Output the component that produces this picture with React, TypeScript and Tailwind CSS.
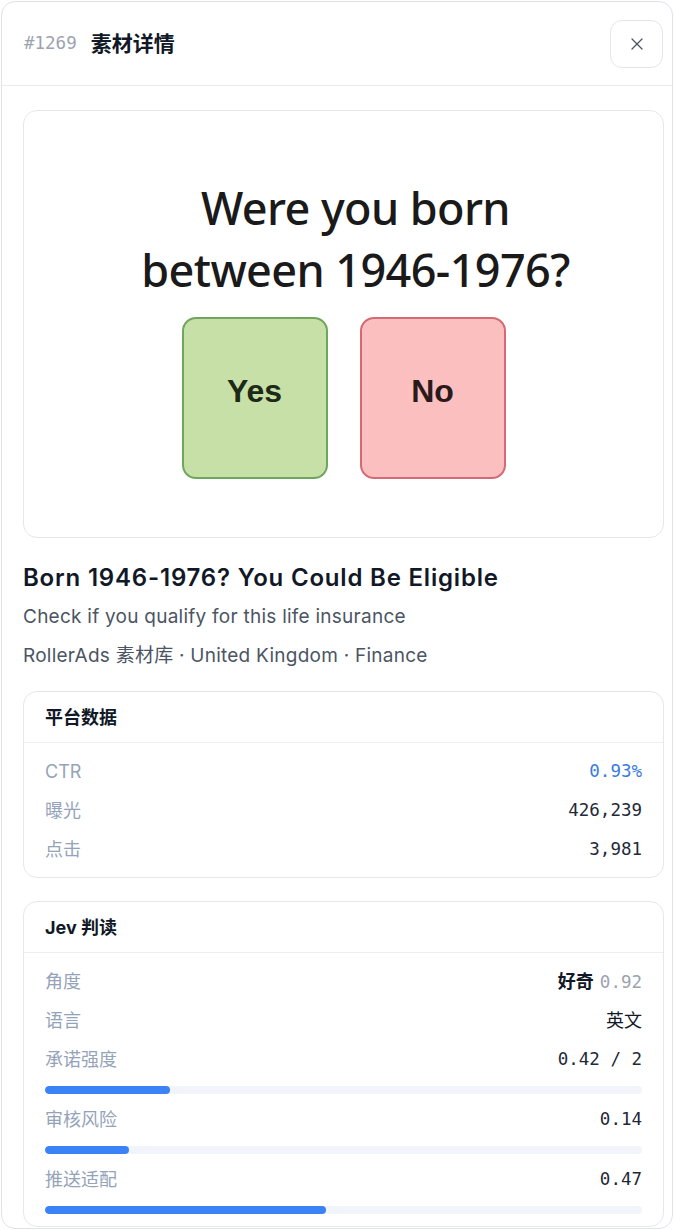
import { X } from 'lucide-react';

const sans = "font-['Inter','Noto_Sans_CJK_SC',sans-serif]";
const mono = "font-['DejaVu_Sans_Mono','Noto_Sans_CJK_SC',monospace]";

const platformStats = [
  { label: 'CTR', value: '0.93%', accent: true },
  { label: '曝光', value: '426,239' },
  { label: '点击', value: '3,981' },
];

const scores = [
  { label: '承诺强度', value: '0.42 / 2', pct: 21 },
  { label: '审核风险', value: '0.14', pct: 14 },
  { label: '推送适配', value: '0.47', pct: 47 },
];

const Card = ({ title, children }: { title: string; children: React.ReactNode }) => (
  <div className="rounded-[14px] border border-[#e5e7eb] bg-white overflow-hidden">
    <div className="h-[51px] flex items-center px-[21px] border-b border-[#eceef1]">
      <h3 className="text-[18px] font-bold text-[#111827]">{title}</h3>
    </div>
    {children}
  </div>
);

const Row = ({ label, children }: { label: string; children: React.ReactNode }) => (
  <div className="h-[39px] flex items-center justify-between">
    <span className="text-[18px] text-[#94a3b8]">{label}</span>
    {children}
  </div>
);

const AdPreview = () => (
  <div className="h-[428px] rounded-[14px] border border-[#e5e7eb] bg-white flex flex-col items-center pt-[66px]">
    <div className="pl-[24px] text-center font-['Noto_Sans',sans-serif] font-medium text-[45px] leading-[62px] text-[#1a1a1a] tracking-[-0.6px]">
      <div>Were you born</div>
      <div>between 1946-1976?</div>
    </div>
    <div className="flex gap-[32px] mt-[16px]">
      <div className="w-[146px] h-[162px] rounded-[14px] border-2 border-[#6ea65e] bg-[#c6e0a8] flex justify-center pt-[54px]">
        <span className="font-['Liberation_Sans',sans-serif] font-bold text-[32px] leading-[36px] text-[#1d2a17]">Yes</span>
      </div>
      <div className="w-[146px] h-[162px] rounded-[14px] border-2 border-[#d46a73] bg-[#fbbfc0] flex justify-center pt-[54px]">
        <span className="font-['Liberation_Sans',sans-serif] font-bold text-[32px] leading-[36px] text-[#2a1a1a]">No</span>
      </div>
    </div>
  </div>
);

export default function App() {
  return (
    <div className={`${sans} bg-white p-px`}>
      <div className="h-[1228px] rounded-[14px] border border-[#dfe3e8] bg-white overflow-hidden flex flex-col">
        <header className="h-[84px] shrink-0 flex items-center justify-between pl-[22px] pr-[9px] border-b border-[#e8eaee]">
          <div className="flex items-center gap-[14px]">
            <span className={`${mono} text-[17.5px] text-[#9ca3af]`}>#1269</span>
            <h2 className="text-[21px] font-bold text-[#111827]">素材详情</h2>
          </div>
          <button className="w-[53px] h-[48px] rounded-[12px] border border-[#e5e7eb] flex items-center justify-center text-[#4b5563]">
            <X size={20} strokeWidth={1.5} />
          </button>
        </header>

        <div className="pl-[21px] pr-[8px] pt-[24px] flex flex-col">
          <AdPreview />

          <h1 className="mt-[25px] text-[24px] leading-[30px] font-semibold text-[#111827] tracking-[0.8px]">
            Born 1946-1976? You Could Be Eligible
          </h1>
          <p className="mt-[4px] text-[19px] leading-[39px] text-[#4b5563] tracking-[0.25px]">
            Check if you qualify for this life insurance
          </p>
          <p className="text-[19px] leading-[39px] text-[#4b5563] tracking-[0.25px]">
            RollerAds 素材库 · United Kingdom · Finance
          </p>

          <div className="mt-[16px]">
            <Card title="平台数据">
              <div className="px-[21px] pt-[9px] pb-[8px]">
                {platformStats.map(s => (
                  <Row key={s.label} label={s.label}>
                    <span className={`${mono} text-[17.5px] ${s.accent ? 'text-[#3b7be0]' : 'text-[#1f2937]'}`}>
                      {s.value}
                    </span>
                  </Row>
                ))}
              </div>
            </Card>
          </div>

          <div className="mt-[23px]">
            <Card title="Jev 判读">
              <div className="px-[21px] pt-[9px] pb-[6px]">
                <Row label="角度">
                  <span className="flex items-baseline gap-[6px]">
                    <span className="text-[18px] font-bold text-[#111827]">好奇</span>
                    <span className={`${mono} text-[17.5px] text-[#9ca3af]`}>0.92</span>
                  </span>
                </Row>
                <Row label="语言">
                  <span className="text-[18px] text-[#111827]">英文</span>
                </Row>
                {scores.map(s => (
                  <div key={s.label} className="pb-[6px]">
                    <Row label={s.label}>
                      <span className={`${mono} text-[17.5px] text-[#1f2937]`}>{s.value}</span>
                    </Row>
                    <div className="mt-[7px] h-[8px] rounded-full bg-[#f1f5f9] overflow-hidden">
                      <div className="h-full rounded-full bg-[#3b82f6]" style={{ width: `${s.pct}%` }} />
                    </div>
                  </div>
                ))}
              </div>
            </Card>
          </div>
        </div>
      </div>
    </div>
  );
}
